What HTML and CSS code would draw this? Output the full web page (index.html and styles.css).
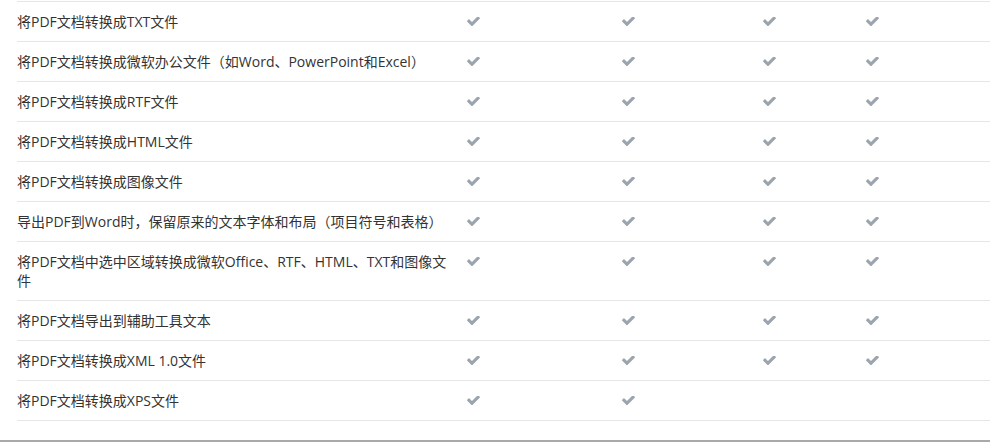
FILE: index.html
```html
<!DOCTYPE html>
<html lang="zh-CN">
<head>
<meta charset="utf-8">
<title>功能对比</title>
<link rel="stylesheet" href="styles.css">
</head>
<body>
<svg class="defs" width="0" height="0" aria-hidden="true">
  <symbol id="chk" viewBox="128 420 1543 1080">
    <path d="M1671 566q0 40-28 68l-724 724-136 136q-28 28-68 28t-68-28l-136-136-362-362q-28-28-28-68t28-68l136-136q28-28 68-28t68 28l294 295 656-657q28-28 68-28t68 28l136 136q28 28 28 68z"/>
  </symbol>
</svg>
<div class="table">
  <div class="row">
    <div class="feat">将PDF文档转换成TXT文件</div>
    <div class="c"><svg class="ck"><use href="#chk"/></svg></div>
    <div class="c"><svg class="ck"><use href="#chk"/></svg></div>
    <div class="c"><svg class="ck"><use href="#chk"/></svg></div>
    <div class="c"><svg class="ck"><use href="#chk"/></svg></div>
  </div>
  <div class="row">
    <div class="feat">将PDF文档转换成微软办公文件（如Word、PowerPoint和Excel）</div>
    <div class="c"><svg class="ck"><use href="#chk"/></svg></div>
    <div class="c"><svg class="ck"><use href="#chk"/></svg></div>
    <div class="c"><svg class="ck"><use href="#chk"/></svg></div>
    <div class="c"><svg class="ck"><use href="#chk"/></svg></div>
  </div>
  <div class="row">
    <div class="feat">将PDF文档转换成RTF文件</div>
    <div class="c"><svg class="ck"><use href="#chk"/></svg></div>
    <div class="c"><svg class="ck"><use href="#chk"/></svg></div>
    <div class="c"><svg class="ck"><use href="#chk"/></svg></div>
    <div class="c"><svg class="ck"><use href="#chk"/></svg></div>
  </div>
  <div class="row">
    <div class="feat">将PDF文档转换成HTML文件</div>
    <div class="c"><svg class="ck"><use href="#chk"/></svg></div>
    <div class="c"><svg class="ck"><use href="#chk"/></svg></div>
    <div class="c"><svg class="ck"><use href="#chk"/></svg></div>
    <div class="c"><svg class="ck"><use href="#chk"/></svg></div>
  </div>
  <div class="row">
    <div class="feat">将PDF文档转换成图像文件</div>
    <div class="c"><svg class="ck"><use href="#chk"/></svg></div>
    <div class="c"><svg class="ck"><use href="#chk"/></svg></div>
    <div class="c"><svg class="ck"><use href="#chk"/></svg></div>
    <div class="c"><svg class="ck"><use href="#chk"/></svg></div>
  </div>
  <div class="row">
    <div class="feat">导出PDF到Word时，保留原来的文本字体和布局（项目符号和表格）</div>
    <div class="c"><svg class="ck"><use href="#chk"/></svg></div>
    <div class="c"><svg class="ck"><use href="#chk"/></svg></div>
    <div class="c"><svg class="ck"><use href="#chk"/></svg></div>
    <div class="c"><svg class="ck"><use href="#chk"/></svg></div>
  </div>
  <div class="row">
    <div class="feat">将PDF文档中选中区域转换成微软Office、RTF、HTML、TXT和图像文件</div>
    <div class="c"><svg class="ck"><use href="#chk"/></svg></div>
    <div class="c"><svg class="ck"><use href="#chk"/></svg></div>
    <div class="c"><svg class="ck"><use href="#chk"/></svg></div>
    <div class="c"><svg class="ck"><use href="#chk"/></svg></div>
  </div>
  <div class="row">
    <div class="feat">将PDF文档导出到辅助工具文本</div>
    <div class="c"><svg class="ck"><use href="#chk"/></svg></div>
    <div class="c"><svg class="ck"><use href="#chk"/></svg></div>
    <div class="c"><svg class="ck"><use href="#chk"/></svg></div>
    <div class="c"><svg class="ck"><use href="#chk"/></svg></div>
  </div>
  <div class="row">
    <div class="feat">将PDF文档转换成XML 1.0文件</div>
    <div class="c"><svg class="ck"><use href="#chk"/></svg></div>
    <div class="c"><svg class="ck"><use href="#chk"/></svg></div>
    <div class="c"><svg class="ck"><use href="#chk"/></svg></div>
    <div class="c"><svg class="ck"><use href="#chk"/></svg></div>
  </div>
  <div class="row">
    <div class="feat">将PDF文档转换成XPS文件</div>
    <div class="c"><svg class="ck"><use href="#chk"/></svg></div>
    <div class="c"><svg class="ck"><use href="#chk"/></svg></div>
    <div class="c"></div>
    <div class="c"></div>
  </div>
</div>
<div class="bottom-line"></div>
</body>
</html>
```

FILE: styles.css
```css
html, body {
  margin: 0;
  padding: 0;
  background: #fff;
}
body {
  padding-top: 1px;
  font-family: "Open Sans", "Noto Sans CJK SC", sans-serif;
  font-size: 14px;
  color: #333;
}
.defs {
  position: absolute;
  width: 0;
  height: 0;
  overflow: hidden;
}
.table {
  margin-left: 17px;
  border-bottom: 1px solid #e6e6e6;
}
.row {
  display: grid;
  grid-template-columns: 450px 155px 141px 103px 1fr;
  align-items: start;
  border-top: 1px solid #e6e6e6;
}
.feat {
  padding: 10px 12px 10px 0;
  line-height: 19px;
}
.c {
  padding: 10px 0;
  height: 19px;
  display: flex;
  align-items: center;
}
.ck {
  width: 13px;
  height: 9px;
  fill: #9ca5ae;
}
.bottom-line {
  margin-top: 19px;
  border-top: 2px solid #a9a9a9;
}
```
